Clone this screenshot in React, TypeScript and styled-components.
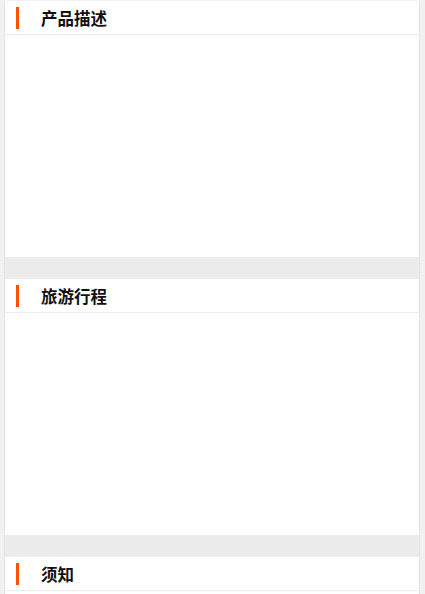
import React from "react";
import styled, { createGlobalStyle } from "styled-components";

const Global = createGlobalStyle`
  html, body {
    margin: 0;
    padding: 0;
    background: #f1f1f1;
    font-family: "Noto Sans CJK SC", "Liberation Sans", sans-serif;
  }
`;

const Page = styled.div`
  margin: 1px 5px 0 4px;
  border-left: 1px solid #e3e3e3;
  border-right: 1px solid #e3e3e3;
  background: #ececec;
  display: flex;
  flex-direction: column;
  gap: 22px;
`;

const Section = styled.section`
  background: #fff;
  display: flex;
  flex-direction: column;
`;

const Header = styled.div`
  display: flex;
  align-items: center;
  border-bottom: 1px solid #ebebeb;
  box-sizing: border-box;
  height: 34px;
`;

const Bar = styled.span`
  width: 3px;
  height: 22px;
  margin-left: 11px;
  background: #ff5200;
`;

const Title = styled.h2`
  margin: 0 0 0 22px;
  font-size: 16.5px;
  font-weight: 700;
  color: #111;
  line-height: 22px;
`;

const Body = styled.div<{ $h: number }>`
  height: ${(p) => p.$h}px;
`;

const sections = [
  { title: "产品描述", h: 222 },
  { title: "旅游行程", h: 222 },
  { title: "须知", h: 222 },
];

export default function App() {
  return (
    <>
      <Global />
      <Page>
        {sections.map((s) => (
          <Section key={s.title}>
            <Header>
              <Bar />
              <Title>{s.title}</Title>
            </Header>
            <Body $h={s.h} />
          </Section>
        ))}
      </Page>
    </>
  );
}
